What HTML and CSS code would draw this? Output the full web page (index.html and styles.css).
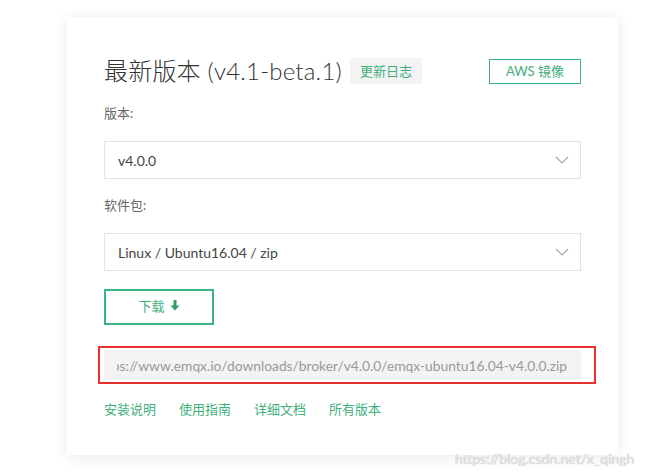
FILE: index.html
```html
<!DOCTYPE html>
<html lang="zh-CN">

<head>
  <meta charset="UTF-8">
  <meta name="viewport" content="width=device-width, initial-scale=1.0">
  <title>下载 EMQ X</title>
  <link rel="stylesheet" href="styles.css">
</head>

<body>
  <div class="download-card">
    <div class="card-header">
      <h2 class="version-title">最新版本 (v4.1-beta.1)</h2>
      <span class="changelog-tag">更新日志</span>
      <a class="aws-btn">AWS 镜像</a>
    </div>

    <div class="field-label">版本:</div>
    <div class="select-box">
      <span>v4.0.0</span>
      <svg class="chevron" width="14" height="8" viewBox="0 0 14 8">
        <path d="M1 1 L7 7 L13 1" fill="none" stroke="#a8a8a8" stroke-width="1.2" />
      </svg>
    </div>

    <div class="field-label">软件包:</div>
    <div class="select-box">
      <span>Linux / Ubuntu16.04 / zip</span>
      <svg class="chevron" width="14" height="8" viewBox="0 0 14 8">
        <path d="M1 1 L7 7 L13 1" fill="none" stroke="#a8a8a8" stroke-width="1.2" />
      </svg>
    </div>

    <button class="download-btn">下载
      <svg width="10" height="11" viewBox="0 0 10 11">
        <path d="M3.5 0 H6.5 V5.5 H9.5 L5 10.5 L0.5 5.5 H3.5 Z" fill="#2e9e63" />
      </svg>
    </button>

    <div class="url-wrap">
      <div class="url-field">
        <div class="url-clip">
          <span>https://www.emqx.io/downloads/broker/v4.0.0/emqx-ubuntu16.04-v4.0.0.zip</span>
        </div>
      </div>
    </div>

    <div class="doc-links">
      <a>安装说明</a>
      <a>使用指南</a>
      <a>详细文档</a>
      <a>所有版本</a>
    </div>
  </div>

  <div class="watermark">https://blog.csdn.net/x_qingh</div>
</body>

</html>
```

FILE: styles.css
```css
body {
  margin: 0;
  background: #ffffff;
  font-family: Lato, "Noto Sans CJK SC", sans-serif;
  color: #333;
  position: relative;
  height: 476px;
  overflow: hidden;
}

.download-card {
  box-sizing: border-box;
  width: 551px;
  height: 438px;
  margin: 17px 0 0 67px;
  padding: 41px 37px 0 37px;
  background: #ffffff;
  box-shadow: 0 2px 14px rgba(0, 0, 0, 0.09);
}

.card-header {
  display: flex;
  align-items: center;
  height: 26px;
}

.version-title {
  margin: 0;
  font-size: 24px;
  font-weight: 300;
  color: #333;
  line-height: 26px;
  letter-spacing: 0.2px;
}

.changelog-tag {
  margin-left: 8px;
  height: 26px;
  line-height: 26px;
  padding: 0 10px;
  background: #f3f3f3;
  color: #42b07c;
  font-size: 13px;
}

.aws-btn {
  margin-left: auto;
  box-sizing: border-box;
  width: 92px;
  height: 25px;
  line-height: 23px;
  text-align: center;
  border: 1px solid #3cb482;
  color: #42b07c;
  font-size: 13px;
}

.field-label {
  margin-top: 19px;
  line-height: 20px;
  font-size: 13px;
  color: #666;
}

.select-box+.field-label {
  margin-top: 16px;
}

.select-box {
  box-sizing: border-box;
  margin-top: 18px;
  height: 38px;
  border: 1px solid #e2e2e2;
  display: flex;
  align-items: center;
  justify-content: space-between;
  padding: 0 11px 0 13px;
  font-size: 14px;
  color: #444;
}

.chevron {
  display: block;
}

.download-btn {
  margin-top: 18px;
  box-sizing: border-box;
  width: 110px;
  height: 36px;
  background: #ffffff;
  border: 2px solid #3cb482;
  color: #42b07c;
  font-family: Lato, "Noto Sans CJK SC", sans-serif;
  font-size: 13px;
  display: flex;
  align-items: center;
  justify-content: center;
  gap: 5px;
  padding: 0 0 3px 0;
}

.url-wrap {
  margin-top: 25px;
  position: relative;
}

.url-wrap::after {
  content: "";
  position: absolute;
  left: -6px;
  right: -15px;
  top: -4px;
  bottom: -4px;
  border: 2.5px solid #e8302c;
}

.url-field {
  height: 30px;
  background: #f3f3f3;
  display: flex;
  align-items: center;
}

.url-clip {
  margin: 0 14px 0 13px;
  flex: 1;
  overflow: hidden;
  display: flex;
  justify-content: flex-end;
  white-space: nowrap;
  font-size: 13.8px;
  color: #999;
}

.doc-links {
  margin-top: 19px;
  display: flex;
  gap: 23px;
  line-height: 20px;
  font-size: 13px;
}

.doc-links a {
  color: #42b07c;
}

.watermark {
  position: absolute;
  left: 455px;
  top: 450px;
  font-size: 14px;
  color: #e2e2e2;
  text-shadow: 0 0 1px #bbb;
  white-space: nowrap;
}
```
